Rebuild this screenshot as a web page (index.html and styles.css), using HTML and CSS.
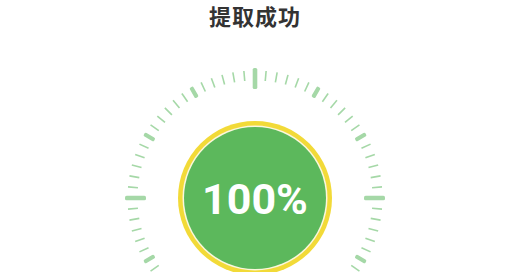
FILE: index.html
```html
<!DOCTYPE html>
<html lang="zh-CN">
<head>
<meta charset="utf-8">
<title>提取成功</title>
<link rel="stylesheet" href="styles.css">
</head>
<body>
<div class="page">
  <h1 class="title">提取成功</h1>
  <div class="dial">
    <svg class="ticks" width="270" height="270" viewBox="-135 -135 270 270">
      <defs>
        <rect id="mj" x="-2.3" y="-130" width="4.6" height="21" rx="1.6"/>
        <rect id="md" x="-2.1" y="-128" width="4.2" height="12" rx="1.6"/>
        <rect id="mn" x="-0.8" y="-127.5" width="1.6" height="10"/>
      </defs>
      <g class="tick-group">
        <use href="#mj" transform="rotate(0)"/>
        <use href="#mn" transform="rotate(5)"/>
        <use href="#mn" transform="rotate(10)"/>
        <use href="#mn" transform="rotate(15)"/>
        <use href="#mn" transform="rotate(20)"/>
        <use href="#mn" transform="rotate(25)"/>
        <use href="#md" transform="rotate(30)"/>
        <use href="#mn" transform="rotate(35)"/>
        <use href="#mn" transform="rotate(40)"/>
        <use href="#mn" transform="rotate(45)"/>
        <use href="#mn" transform="rotate(50)"/>
        <use href="#mn" transform="rotate(55)"/>
        <use href="#md" transform="rotate(60)"/>
        <use href="#mn" transform="rotate(65)"/>
        <use href="#mn" transform="rotate(70)"/>
        <use href="#mn" transform="rotate(75)"/>
        <use href="#mn" transform="rotate(80)"/>
        <use href="#mn" transform="rotate(85)"/>
        <use href="#mj" transform="rotate(90)"/>
        <use href="#mn" transform="rotate(95)"/>
        <use href="#mn" transform="rotate(100)"/>
        <use href="#mn" transform="rotate(105)"/>
        <use href="#mn" transform="rotate(110)"/>
        <use href="#mn" transform="rotate(115)"/>
        <use href="#md" transform="rotate(120)"/>
        <use href="#mn" transform="rotate(125)"/>
        <use href="#mn" transform="rotate(130)"/>
        <use href="#mn" transform="rotate(135)"/>
        <use href="#mn" transform="rotate(140)"/>
        <use href="#mn" transform="rotate(145)"/>
        <use href="#md" transform="rotate(150)"/>
        <use href="#mn" transform="rotate(155)"/>
        <use href="#mn" transform="rotate(160)"/>
        <use href="#mn" transform="rotate(165)"/>
        <use href="#mn" transform="rotate(170)"/>
        <use href="#mn" transform="rotate(175)"/>
        <use href="#mj" transform="rotate(180)"/>
        <use href="#mn" transform="rotate(185)"/>
        <use href="#mn" transform="rotate(190)"/>
        <use href="#mn" transform="rotate(195)"/>
        <use href="#mn" transform="rotate(200)"/>
        <use href="#mn" transform="rotate(205)"/>
        <use href="#md" transform="rotate(210)"/>
        <use href="#mn" transform="rotate(215)"/>
        <use href="#mn" transform="rotate(220)"/>
        <use href="#mn" transform="rotate(225)"/>
        <use href="#mn" transform="rotate(230)"/>
        <use href="#mn" transform="rotate(235)"/>
        <use href="#md" transform="rotate(240)"/>
        <use href="#mn" transform="rotate(245)"/>
        <use href="#mn" transform="rotate(250)"/>
        <use href="#mn" transform="rotate(255)"/>
        <use href="#mn" transform="rotate(260)"/>
        <use href="#mn" transform="rotate(265)"/>
        <use href="#mj" transform="rotate(270)"/>
        <use href="#mn" transform="rotate(275)"/>
        <use href="#mn" transform="rotate(280)"/>
        <use href="#mn" transform="rotate(285)"/>
        <use href="#mn" transform="rotate(290)"/>
        <use href="#mn" transform="rotate(295)"/>
        <use href="#md" transform="rotate(300)"/>
        <use href="#mn" transform="rotate(305)"/>
        <use href="#mn" transform="rotate(310)"/>
        <use href="#mn" transform="rotate(315)"/>
        <use href="#mn" transform="rotate(320)"/>
        <use href="#mn" transform="rotate(325)"/>
        <use href="#md" transform="rotate(330)"/>
        <use href="#mn" transform="rotate(335)"/>
        <use href="#mn" transform="rotate(340)"/>
        <use href="#mn" transform="rotate(345)"/>
        <use href="#mn" transform="rotate(350)"/>
        <use href="#mn" transform="rotate(355)"/>
      </g>
    </svg>
    <div class="ring">
      <div class="core">
        <span class="percent">100%</span>
      </div>
    </div>
  </div>
</div>
</body>
</html>
```
FILE: styles.css
```css
html, body {
  margin: 0;
  padding: 0;
  background: #ffffff;
}

.page {
  width: 510px;
  display: flex;
  flex-direction: column;
  align-items: center;
}

.title {
  margin: 0;
  height: 32px;
  font-family: "Noto Sans CJK SC", "Noto Sans", sans-serif;
  font-weight: 700;
  font-size: 22px;
  line-height: 30px;
  color: #333333;
  letter-spacing: 1px;
}

.dial {
  position: relative;
  width: 270px;
  height: 270px;
  margin-top: 31px;
  display: flex;
  align-items: center;
  justify-content: center;
}

.ticks {
  position: absolute;
  left: 0;
  top: 0;
}

.tick-group {
  fill: #a5d8a7;
}

.ring {
  width: 154px;
  height: 154px;
  border-radius: 50%;
  background: #f2da38;
  display: flex;
  align-items: center;
  justify-content: center;
}

.core {
  width: 142px;
  height: 142px;
  border-radius: 50%;
  background: #5cb85c;
  box-shadow: 0 0 0 1.5px #fbf7dc;
  display: flex;
  align-items: center;
  justify-content: center;
}

.percent {
  font-family: Roboto, "Liberation Sans", sans-serif;
  font-weight: 700;
  font-size: 43px;
  color: #ffffff;
  line-height: 1;
  padding-top: 2px;
}
```
